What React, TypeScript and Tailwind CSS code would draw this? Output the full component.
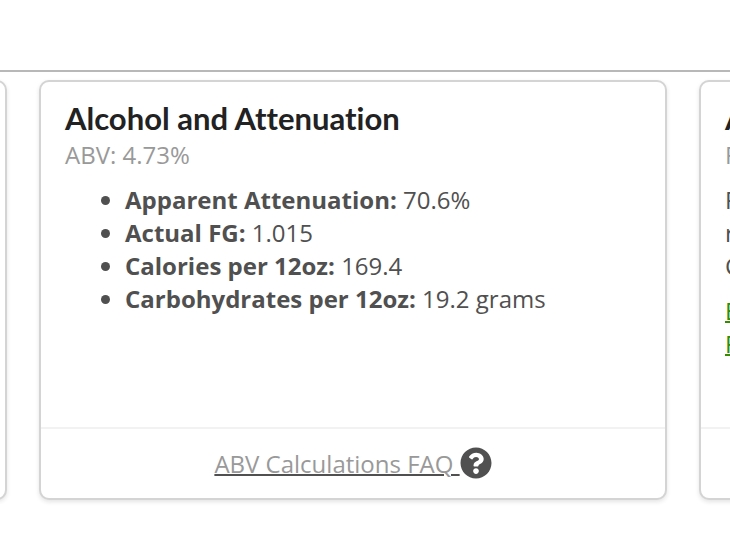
import type { ReactNode } from 'react'
import { FaQuestionCircle } from 'react-icons/fa'

const STATS = [
  { label: 'Apparent Attenuation', value: '70.6%' },
  { label: 'Actual FG', value: '1.015' },
  { label: 'Calories per 12oz', value: '169.4' },
  { label: 'Carbohydrates per 12oz', value: '19.2 grams' },
]

function Card({ children, className = '' }: { children?: ReactNode; className?: string }) {
  return (
    <section className={`flex flex-col rounded-[10px] border-2 border-[#d4d4d5] bg-white shadow-[0_2px_4px_rgba(34,36,38,0.12)] ${className}`}>
      {children}
    </section>
  )
}

function CardBody({ title, meta, children }: { title: string; meta: string; children: ReactNode }) {
  return (
    <div className="min-h-[345px] flex-1 px-6 pt-5 pb-6">
      <h2 className="font-['Lato',sans-serif] text-[31px] leading-8 font-bold text-[#222] [font-variant-ligatures:none]">{title}</h2>
      <p className="leading-[42px] text-[#999]">{meta}</p>
      {children}
    </div>
  )
}

function CardFooter({ children }: { children?: ReactNode }) {
  return <div className="flex h-[71px] items-center justify-center border-t-2 border-[#f2f2f2]">{children}</div>
}

export default function App() {
  return (
    <main className="overflow-x-hidden bg-white pt-[70px] pb-12 font-['Open_Sans',sans-serif] text-[24px] leading-[33px] font-normal text-[#505050]">
      <hr className="border-t-2 border-[#b8b8b8]" />

      <div className="mt-2 grid grid-cols-[7px_minmax(0,1fr)_31px] gap-8">
        <div className="flex justify-end">
          <Card className="w-[628px] shrink-0" />
        </div>

        <Card>
          <CardBody title="Alcohol and Attenuation" meta="ABV: 4.73%">
            <ul className="mt-[7px] list-disc pl-[60px]">
              {STATS.map((stat) => (
                <li key={stat.label}>
                  <b className="font-bold">{stat.label}:</b> {stat.value}
                </li>
              ))}
            </ul>
          </CardBody>
          <CardFooter>
            <a href="#abv-faq" className="flex items-start text-[#999]">
              <span className="whitespace-pre underline decoration-[#505050] decoration-2">ABV Calculations FAQ </span>
              <FaQuestionCircle className="size-8 text-[#505050]" />
            </a>
          </CardFooter>
        </Card>

        <div className="flex">
          <Card className="w-[628px] shrink-0">
            <CardBody title="A" meta="F">
              <p className="mt-[7px]">
                R<br />
                r<br />
                C
              </p>
              <div className="mt-3 flex flex-col items-start text-[#378b00] underline decoration-2">
                <a href="#first">E</a>
                <a href="#second">F</a>
              </div>
            </CardBody>
            <CardFooter />
          </Card>
        </div>
      </div>
    </main>
  )
}
